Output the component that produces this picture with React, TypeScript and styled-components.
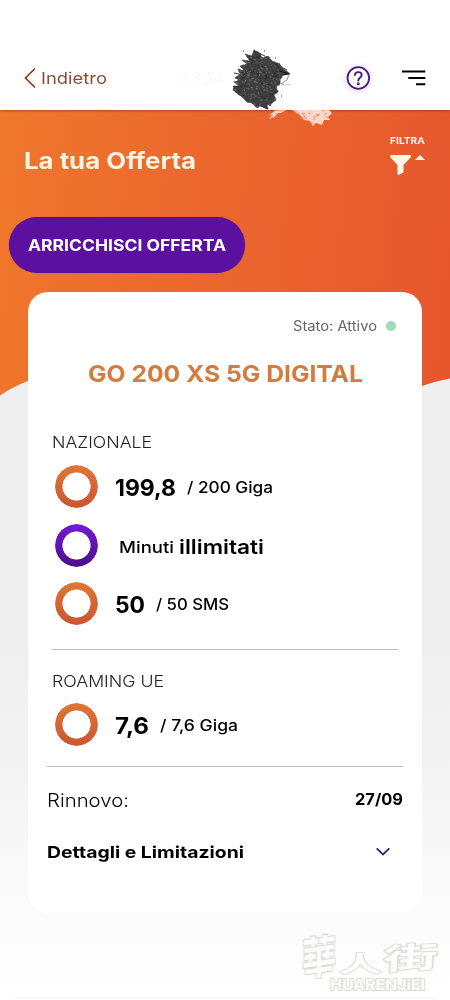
import React, { useLayoutEffect, useRef, useState } from "react";
import styled, { createGlobalStyle } from "styled-components";

const GlobalStyle = createGlobalStyle`
  * { box-sizing: border-box; }
  body { margin: 0; background: #fff; font-family: Inter, "Noto Sans", sans-serif; color: #000; }
`;

const FitOuter = styled.span<{ $w: number }>`
  display: block;
  flex: none;
  width: ${(p) => p.$w}px;
  text-align: left;
  white-space: nowrap;
`;
const FitInner = styled.span<{ $size: number; $weight: number; $color: string }>`
  display: inline-block;
  vertical-align: top;
  transform-origin: 0 50%;
  font-size: ${(p) => p.$size}px;
  font-weight: ${(p) => p.$weight};
  color: ${(p) => p.$color};
  line-height: 24px;
`;

type LabelProps = { w: number; size: number; weight?: number; color?: string; children: React.ReactNode };

function Label({ w, size, weight = 400, color = "#000", children }: LabelProps) {
  const ref = useRef<HTMLSpanElement>(null);
  const [scale, setScale] = useState(1);
  useLayoutEffect(() => {
    if (ref.current && ref.current.offsetWidth) {
      const natural = parseFloat(getComputedStyle(ref.current).width);
      setScale(w / natural);
    }
  }, [w]);
  return (
    <FitOuter $w={w}>
      <FitInner ref={ref} $size={size} $weight={weight} $color={color} style={{ transform: `scaleX(${scale})` }}>
        {children}
      </FitInner>
    </FitOuter>
  );
}

const Screen = styled.div`
  position: relative;
  width: 450px;
  height: 1000px;
  overflow: hidden;
  background: linear-gradient(#efefef 0, #efefef 640px, #f3f3f3 760px, #fafafa 890px, #fefefe 970px, #fff 990px);
`;
const Header = styled.header`
  position: relative;
  z-index: 2;
  display: flex;
  align-items: center;
  height: 110px;
  padding: 45px 24px 0;
  background: #fff;
  box-shadow: 0 1px 2px rgba(70, 60, 50, 0.55);
`;
const Back = styled.button`
  display: flex;
  align-items: center;
  gap: 5px;
  padding: 0;
  border: 0;
  background: none;
  font-family: inherit;
`;
const Ghost = styled.div`
  margin-left: 72px;
  flex: 1;
`;
const Help = styled.div`
  width: 24px;
  height: 24px;
  margin-right: 32px;
  border-radius: 50%;
  box-shadow: 0 1px 6px rgba(100, 40, 190, 0.22);
`;
const Scribble = styled.svg`
  position: absolute;
  z-index: 3;
  left: 225px;
  top: 40px;
`;
const Hero = styled.div`
  height: 290px;
  background: linear-gradient(96deg, #ef772c 0%, #eb662d 48%, #e6562e 100%);
  clip-path: path("M0 0H450V268.5Q436 271 422 276L28 271Q12 277 0 285.5Z");
`;
const TitleRow = styled.div`
  display: flex;
  justify-content: space-between;
  padding: 19px 25px 0 24px;
  height: 107px;
`;
const TitleBox = styled.div`
  padding-top: 20px;
`;
const Filter = styled.div`
  display: flex;
  flex-direction: column;
  align-items: flex-start;
`;
const FilterIcons = styled.div`
  display: flex;
  gap: 4px;
  margin-top: 2px;
`;
const Enrich = styled.button`
  display: flex;
  align-items: center;
  justify-content: center;
  width: 236px;
  height: 56px;
  margin-left: 9px;
  padding: 0;
  border: 0;
  border-radius: 28px;
  background: #5b109f;
  box-shadow: 0 0 1px #7d327f;
  font-family: inherit;
`;
const Card = styled.main`
  position: relative;
  width: 394px;
  height: 621px;
  margin: -108px 0 0 28px;
  border-radius: 20px;
  background: #fff;
  display: flex;
  flex-direction: column;
`;
const Status = styled.div`
  display: flex;
  align-items: center;
  justify-content: flex-end;
  gap: 9px;
  height: 24px;
  margin-top: 22px;
  padding-right: 26px;
`;
const Dot = styled.i`
  width: 10px;
  height: 10px;
  border-radius: 50%;
  background: #9ddbb9;
`;
const OfferName = styled.h1`
  margin: 24px 0 0 60px;
  height: 24px;
`;
const Section = styled.h2<{ $top: number }>`
  margin: ${(p) => p.$top}px 0 0 24px;
  height: 24px;
`;
const Usage = styled.div<{ $top: number }>`
  display: flex;
  align-items: center;
  height: 43px;
  margin-top: ${(p) => p.$top}px;
  padding-left: 27px;
`;
const Ring = styled.div<{ $violet?: boolean }>`
  width: 43px;
  height: 43px;
  border-radius: 50%;
  background: ${(p) => (p.$violet ? "linear-gradient(#731bd2, #4b0e8b)" : "linear-gradient(#df7635, #cb5532)")};
  mask: radial-gradient(circle, transparent 13.7px, #000 14.4px);
`;
const Amount = styled.div`
  display: flex;
  margin: 3px 11px 0 17px;
`;
const Total = styled.div`
  margin-top: 2px;
`;
const Unlimited = styled.div`
  display: flex;
  gap: 5px;
  margin: 4px 0 0 21px;
`;
const Strong = styled.div`
  margin-top: -1px;
`;
const Rule = styled.hr<{ $top: number; $inset: number }>`
  width: calc(100% - ${(p) => p.$inset * 2}px);
  height: 1px;
  margin: ${(p) => p.$top}px auto 0;
  border: 0;
  background: #bdbdbd;
`;
const Row = styled.div<{ $top: number; $right: number }>`
  display: flex;
  align-items: center;
  justify-content: space-between;
  height: 24px;
  margin-top: ${(p) => p.$top}px;
  padding: 0 ${(p) => p.$right}px 0 19px;
`;
const Watermark = styled.svg`
  position: absolute;
  left: 290px;
  top: 920px;
  paint-order: stroke;
  stroke-linejoin: round;
`;
const Sheet = styled.div`
  position: absolute;
  left: 10px;
  right: 10px;
  top: 998px;
  height: 20px;
  border-radius: 16px;
  background: #fafafa;
  box-shadow: 0 0 3px rgba(0, 0, 0, 0.06);
`;

function rng(seed: number) {
  let s = seed;
  return () => (s = (s * 16807) % 2147483647) / 2147483647;
}
const rand = rng(91);
const grain = Array.from({ length: 900 }, () => {
  const x = rand() * 62 + 4;
  const y = rand() * 64 + 6;
  const l = 0.8 + rand() * 1.6;
  const tone = ["#222", "#333", "#6a6a6a", "#808080", "#5c5c5c"][Math.floor(rand() * 5)];
  return { d: `M${x.toFixed(1)} ${y.toFixed(1)}l${l.toFixed(1)} ${(l * (rand() * 1.6 - 0.6)).toFixed(1)}`, tone };
});
const flecks = Array.from({ length: 80 }, () => {
  const x = rand() * 58 + 43;
  const y = 70 + rand() * 17;
  return `M${x.toFixed(1)} ${y.toFixed(1)}l${(1 + rand() * 2).toFixed(1)} ${(rand() * 2 - 1).toFixed(1)}`;
}).join("");
const INK = "M20 14L27 16L29 10L35 13L37 18L43 16L47 21L55 24L57 28L60 30L64 33L58 35L55 40L55 44L51 47L53 52L49 55L51 60L47 63L45 66L42 64L43 69L35 66L32 68L27 63L22 62L18 57L13 54L8 50L9 46L14 46L9 42L15 40L10 38L15 34L13 29L20 31L15 26L22 24L17 20L25 21Z";
const SMEAR = "M67 70H104L107 73L103 77L105 80L99 80L97 85L91 83L88 86L85 81L79 80L75 75Z M51 70H61L56 73L53 73L50 77L44 79L48 74L43 76Z";

function ScribbleMark() {
  return (
    <Scribble width="115" height="90" viewBox="0 0 115 90" fill="none">
      <defs>
        <clipPath id="ink"><path d={INK} /></clipPath>
        <clipPath id="smear"><path d={SMEAR} /></clipPath>
      </defs>
      <path d={SMEAR} fill="#f7d8ca" />
      <g clipPath="url(#smear)"><path d={flecks} stroke="#ed7d4b" strokeWidth=".8" /></g>
      <path d={INK} fill="#3f3f3f" stroke="#3b3b3b" strokeWidth=".8" strokeDasharray="3 1" />
      <g clipPath="url(#ink)" strokeWidth=".8">
        {grain.map((g, i) => <path key={i} d={g.d} stroke={g.tone} />)}
      </g>
      <path d="M29 11l11 5M48 23l14 7M8 46l8 7M9 50l13 11M38 67l5 2M14 34l-5-1" stroke="#333" />
      <path d="M54 31l11 3M57 35l7-1" stroke="#151515" strokeWidth="1.2" />
      <path d="M64 34l-2 6-6 4M55 43l4 2" stroke="#777" strokeWidth=".8" />
      <path d="M60 44.5h6" stroke="#bbb" strokeWidth=".6" />
      <path d="M39 11h1M50 18h1M56 56h1M18 11h1" stroke="#333" />
    </Scribble>
  );
}

function UsageRow({ top, amount, aw, total, tw }: { top: number; amount: string; aw: number; total: string; tw: number }) {
  return (
    <Usage $top={top}>
      <Ring />
      <Amount><Label w={aw} size={23} weight={700}>{amount}</Label></Amount>
      <Total><Label w={tw} size={15.6} weight={500}>{total}</Label></Total>
    </Usage>
  );
}

export default function App() {
  return (
    <>
      <GlobalStyle />
      <Screen>
        <Header>
          <Back>
            <svg width="12" height="22" viewBox="0 0 12 22" fill="none" stroke="#8b3d20" strokeWidth="1.7">
              <path d="M11 1.5L1.5 11L11 20.5" />
            </svg>
            <Label w={66} size={16.3} weight={400} color="#8a4d38">Indietro</Label>
          </Back>
          <Ghost><Label w={46} size={16} color="#f9f9f9">3334</Label></Ghost>
          <Help>
            <svg width="24" height="24" viewBox="0 0 24 24" fill="none" stroke="#4b1680" strokeWidth="1.8" strokeLinecap="round">
              <circle cx="12.3" cy="12" r="10.8" fill="#fff" />
              <path d="M8.8 9.2c.2-2 1.6-3.1 3.5-3.1 2 0 3.4 1.2 3.4 2.9 0 2.6-3.4 2.5-3.4 5.7" />
              <circle cx="12.3" cy="17.8" r=".6" />
            </svg>
          </Help>
          <svg width="24" height="16" viewBox="0 0 24 16" stroke="#000" strokeWidth="1.9">
            <path d="M0 1.5H23.3M6.3 8H23.3M14 14.3H23.3" />
          </svg>
          <ScribbleMark />
        </Header>
        <Hero>
          <TitleRow>
            <TitleBox><Label w={172} size={23} weight={650} color="#fff3e3">La tua Offerta</Label></TitleBox>
            <Filter>
              <Label w={35} size={9.3} weight={700} color="#fff0e6">FILTRA</Label>
              <FilterIcons>
                <svg width="21" height="20" viewBox="0 0 21 20" fill="#fff6ee">
                  <path d="M0 0H21V2L13.5 10V17.5L8.5 20H7.5V10L0 2Z" />
                </svg>
                <svg width="10" height="6" viewBox="0 0 10 6" fill="#fff0e6"><path d="M0 5L5 0L10 5Z" /></svg>
              </FilterIcons>
            </Filter>
          </TitleRow>
          <Enrich><Label w={198} size={16} weight={650} color="#fff">ARRICCHISCI OFFERTA</Label></Enrich>
        </Hero>
        <Card>
          <Status><Label w={84} size={14} color="#666">Stato: Attivo</Label><Dot /></Status>
          <OfferName><Label w={275} size={23.3} weight={700} color="#d37c3f">GO 200 XS 5G DIGITAL</Label></OfferName>
          <Section $top={44}><Label w={100} size={16} weight={300} color="#222">NAZIONALE</Label></Section>
          <UsageRow top={11} amount="199,8" aw={61} total="/ 200 Giga" tw={86} />
          <Usage $top={16}>
            <Ring $violet />
            <Unlimited>
              <Label w={55} size={15.6} weight={500}>Minuti</Label>
              <Strong><Label w={85} size={19.5} weight={600}>illimitati</Label></Strong>
            </Unlimited>
          </Usage>
          <UsageRow top={15} amount="50" aw={30} total="/ 50 SMS" tw={73} />
          <Rule $top={24} $inset={24} />
          <Section $top={19}><Label w={112} size={16} weight={300} color="#222">ROAMING UE</Label></Section>
          <UsageRow top={10} amount="7,6" aw={34} total="/ 7,6 Giga" tw={78} />
          <Rule $top={20} $inset={19} />
          <Row $top={21} $right={19}>
            <Label w={82} size={18.3} weight={350}>Rinnovo:</Label>
            <Label w={48} size={15.6} weight={700}>27/09</Label>
          </Row>
          <Row $top={28} $right={32}>
            <Label w={197} size={16.5} weight={650}>Dettagli e Limitazioni</Label>
            <svg width="14" height="9" viewBox="0 0 14 9" fill="none" stroke="#47206e" strokeWidth="1.8"><path d="M.7 .3L7 6.5L13.3 .3" /></svg>
          </Row>
        </Card>
        <Watermark width="160" height="80" viewBox="0 0 160 80" fill="#fefefe" stroke="#dedad4" strokeWidth="2.2" fontFamily="'Noto Sans CJK TC', sans-serif" fontWeight="700">
          <text transform="translate(12 56) rotate(-8) skewX(-8) scale(.86 1.1)" fontSize="40">華</text>
          <text transform="translate(49 52) scale(1.3 .68)" fontSize="33">人</text>
          <text transform="translate(93 50) rotate(-3) skewX(-6) scale(1.6 .86)" fontSize="34">街</text>
          <text x="40" y="70" fontFamily="Inter, sans-serif" fontSize="14" strokeWidth="1.8" textLength="95" lengthAdjust="spacingAndGlyphs">HUARENJiEI</text>
        </Watermark>
        <Sheet />
      </Screen>
    </>
  );
}
